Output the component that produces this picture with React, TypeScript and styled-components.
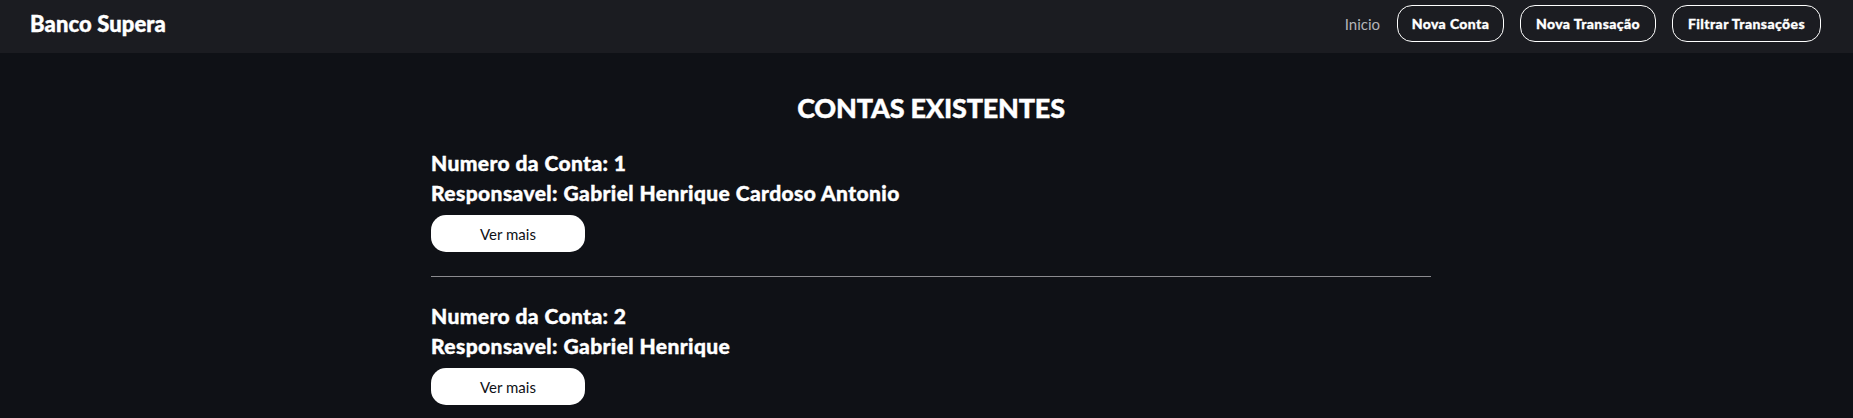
import React from "react";
import styled, { createGlobalStyle } from "styled-components";

const GlobalStyle = createGlobalStyle`
  html, body {
    margin: 0;
    padding: 0;
    background: #0f1116;
    font-family: Lato, "Open Sans", sans-serif;
    color: #ffffff;
  }
  * { box-sizing: border-box; }
`;

const Navbar = styled.header`
  display: flex;
  align-items: center;
  justify-content: space-between;
  height: 53px;
  padding: 0 32px 6px 30px;
  background: #1b1c21;
`;

const Brand = styled.a`
  font-size: 22px;
  font-weight: 900;
  color: #ffffff;
  text-decoration: none;
  letter-spacing: 0.1px;
  -webkit-text-stroke: 0.4px #ffffff;
`;

const NavLinks = styled.nav`
  display: flex;
  align-items: center;
  gap: 16px;
`;

const NavLink = styled.a`
  font-size: 15px;
  color: #b4b4b8;
  text-decoration: none;
  margin-right: 1px;
`;

const NavButton = styled.button<{ $w: number }>`
  height: 37px;
  width: ${(p) => p.$w}px;
  border: 1px solid #ffffff;
  border-radius: 15px;
  background: transparent;
  color: #ffffff;
  font-family: inherit;
  font-weight: 900;
  font-size: 14px;
  letter-spacing: 0.4px;
  -webkit-text-stroke: 0.3px #ffffff;
  cursor: pointer;
`;

const Main = styled.main`
  display: flex;
  flex-direction: column;
  align-items: center;
  padding-left: 9px;
`;

const Title = styled.h1`
  margin: 38px 0 24px;
  font-size: 27px;
  font-weight: 900;
  letter-spacing: -0.2px;
  -webkit-text-stroke: 0.4px #ffffff;
`;

const AccountList = styled.section`
  width: 1000px;
  display: flex;
  flex-direction: column;
`;

const AccountCard = styled.article`
  display: flex;
  flex-direction: column;
  align-items: flex-start;
`;

const InfoLine = styled.p`
  margin: 0;
  font-size: 21px;
  font-weight: 900;
  line-height: 30px;
  letter-spacing: 0.4px;
  -webkit-text-stroke: 0.4px #ffffff;
`;

const MoreButton = styled.button`
  margin-top: 7px;
  width: 154px;
  height: 37px;
  border: none;
  border-radius: 15px;
  background: #ffffff;
  color: #0f1116;
  font-family: inherit;
  font-size: 15px;
  cursor: pointer;
`;

const Divider = styled.hr`
  width: 100%;
  margin: 24px 0 24px;
  border: 0;
  border-top: 1px solid #8b8b8f;
`;

const accounts = [
  { id: 1, owner: "Gabriel Henrique Cardoso Antonio" },
  { id: 2, owner: "Gabriel Henrique" },
];

export default function App() {
  return (
    <>
      <GlobalStyle />
      <Navbar>
        <Brand href="#">Banco Supera</Brand>
        <NavLinks>
          <NavLink href="#">Inicio</NavLink>
          <NavButton $w={107}>Nova Conta</NavButton>
          <NavButton $w={136}>Nova Transação</NavButton>
          <NavButton $w={149}>Filtrar Transações</NavButton>
        </NavLinks>
      </Navbar>
      <Main>
        <Title>CONTAS EXISTENTES</Title>
        <AccountList>
          {accounts.map((a) => (
            <React.Fragment key={a.id}>
              <AccountCard>
                <InfoLine>Numero da Conta: {a.id}</InfoLine>
                <InfoLine>Responsavel: {a.owner}</InfoLine>
                <MoreButton>Ver mais</MoreButton>
              </AccountCard>
              <Divider />
            </React.Fragment>
          ))}
        </AccountList>
      </Main>
    </>
  );
}
